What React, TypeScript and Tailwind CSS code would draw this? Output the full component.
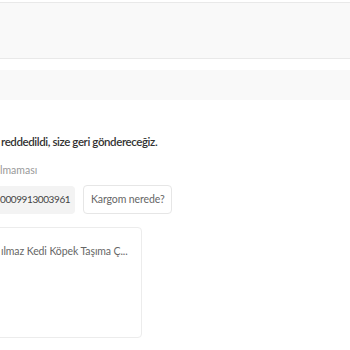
import * as React from "react";

export default function App() {
  return (
    <div className="w-[350px] h-[350px] overflow-hidden bg-white font-['Lato',sans-serif]">
      {/* Header strip */}
      <div className="mt-[2px] h-[57px] border-y border-[#e9e9e9] bg-[#f9f9f9]" />
      {/* Filter strip */}
      <div className="mt-[11px] h-[30px] bg-[#f9f9f9]" />

      {/* Order status */}
      <div className="pt-[33px]">
        <p className="pl-[1px] text-[11.5px] leading-[18px] font-semibold tracking-[-0.4px] text-[#333]">
          reddedildi, size geri göndereceğiz.
        </p>
        <p className="mt-[11px] text-[10.5px] leading-[16px] text-[#999]">lmaması</p>

        <div className="mt-[7px] flex items-center gap-[8px]">
          <div className="-ml-[6px] flex h-[28px] w-[81px] items-center rounded-r-[4px] bg-[#f3f3f3] pl-[6px] text-[10px] tracking-[-0.4px] text-[#444]">
            0009913003961
          </div>
          <button className="flex h-[29px] w-[89px] items-center rounded-[4px] border border-[#e6e6e6] bg-white pl-[7px] text-[10.5px] tracking-[-0.1px] text-[#666]">
            Kargom nerede?
          </button>
        </div>

        {/* Product card */}
        <div className="mt-[13px] -ml-[6px] h-[111px] w-[148px] rounded-[4px] border border-[#ececec] bg-white pl-[6px] pt-[15px]">
          <p className="whitespace-nowrap text-[10.5px] leading-[16px] tracking-[-0.1px] text-[#666]">
            ılmaz Kedi Köpek Taşıma Ç...
          </p>
        </div>
      </div>
    </div>
  );
}
